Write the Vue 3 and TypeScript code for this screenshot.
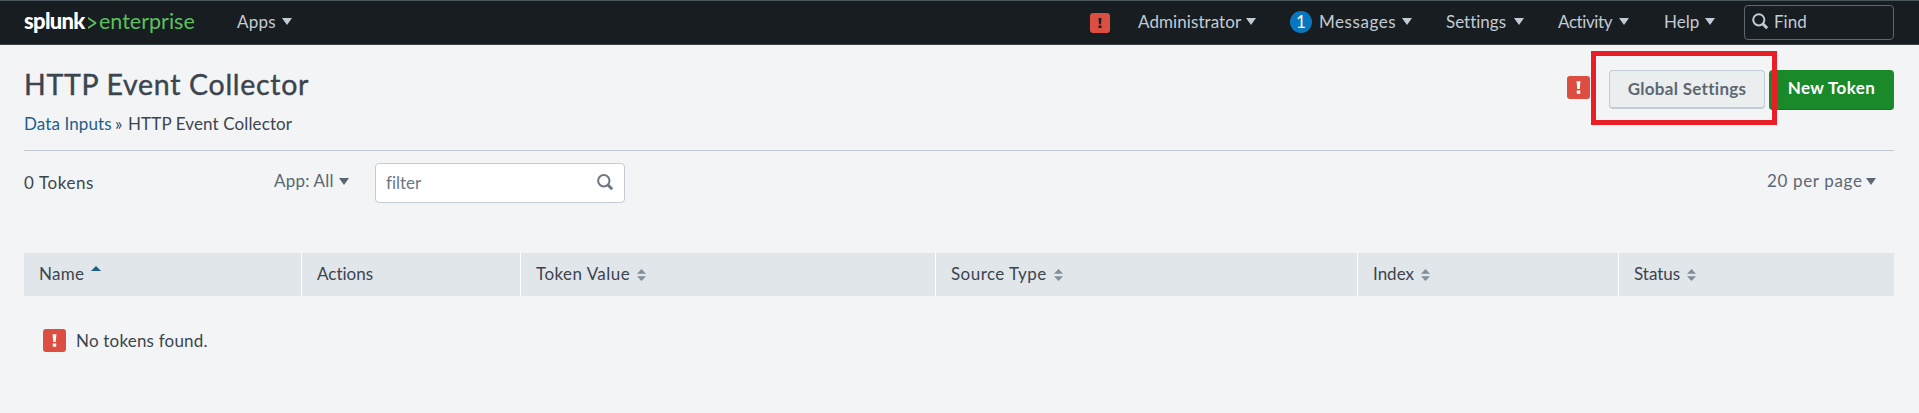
<script setup lang="ts">
interface MenuItem { id: string; label: string; badge?: string }
interface Column { id: string; label: string; sort: 'none' | 'both' | 'asc' }

const menus: MenuItem[] = [
  { id: 'administrator', label: 'Administrator' },
  { id: 'messages', label: 'Messages', badge: '1' },
  { id: 'settings', label: 'Settings' },
  { id: 'activity', label: 'Activity' },
  { id: 'help', label: 'Help' },
]

const columns: Column[] = [
  { id: 'name', label: 'Name', sort: 'asc' },
  { id: 'row-actions', label: 'Actions', sort: 'none' },
  { id: 'value', label: 'Token Value', sort: 'both' },
  { id: 'source', label: 'Source Type', sort: 'both' },
  { id: 'index', label: 'Index', sort: 'both' },
  { id: 'status', label: 'Status', sort: 'both' },
]
</script>

<template>
  <div class="page">
    <header class="navbar">
      <div class="logo"><span class="brand">splunk</span><svg class="chevron" viewBox="0 0 9 14"><path d="M0.5 1 L8.8 6.2 V7.8 L0.5 13 V10.9 L6.6 7 L0.5 3.1 Z" /></svg><span class="edition">enterprise</span></div>
      <a class="menu apps"><span class="label">Apps</span><i class="caret"></i></a>
      <div class="alert dark"><svg viewBox="0 0 24 24"><path d="M10.2 6 h3.6 l-.6 7.5 h-2.4z M10.3 15h3.4v3h-3.4z" /></svg></div>
      <a v-for="m in menus" :key="m.id" class="menu" :class="m.id">
        <span v-if="m.badge" class="badge">{{ m.badge }}</span>
        <span class="label">{{ m.label }}</span><i class="caret"></i>
      </a>
      <div class="find">
        <svg class="glass" viewBox="0 0 17 17"><circle cx="6.8" cy="6.8" r="5.6" /><path d="M11 11 L15.2 15.2" /></svg>
        <span>Find</span>
      </div>
    </header>

    <section class="heading">
      <div class="titles">
        <h1>HTTP Event Collector</h1>
        <nav class="crumbs"><a>Data Inputs</a><span class="sep">»</span><span class="here">HTTP Event Collector</span></nav>
      </div>
      <div class="actions">
        <div class="alert"><svg viewBox="0 0 24 24"><path d="M10 5.5 h4 l-.7 8 h-2.6z M10.2 15.2h3.6v3.2h-3.6z" /></svg></div>
        <div class="global">
          <button class="btn secondary">Global Settings</button>
          <div class="highlight"></div>
        </div>
        <button class="btn primary">New Token</button>
      </div>
    </section>

    <section class="toolbar">
      <span class="count">0 Tokens</span>
      <a class="app-filter"><span class="label">App: All</span><i class="caret"></i></a>
      <div class="filter">
        <span>filter</span>
        <svg class="glass" viewBox="0 0 17 17"><circle cx="6.8" cy="6.8" r="5.7" /><path d="M11 11 L15.2 15.2" /></svg>
      </div>
      <a class="per-page"><span class="label">20 per page</span><i class="caret"></i></a>
    </section>

    <div class="table-head">
      <div v-for="c in columns" :key="c.id" class="cell" :class="c.id">
        <span class="label">{{ c.label }}</span>
        <svg v-if="c.sort === 'both'" class="sort" viewBox="0 0 9 12"><path d="M0 4.8 L4.5 0 L9 4.8Z M0 7.2 L4.5 12 L9 7.2Z" /></svg>
        <svg v-if="c.sort === 'asc'" class="sort-asc" viewBox="0 0 10 5"><path d="M0 5 L5 0 L10 5Z" /></svg>
      </div>
    </div>

    <div class="empty">
      <div class="alert"><svg viewBox="0 0 24 24"><path d="M10 5.5 h4 l-.7 8 h-2.6z M10.2 15.2h3.6v3.2h-3.6z" /></svg></div>
      <span class="label">No tokens found.</span>
    </div>
  </div>
</template>

<style>
body { margin: 0; background: #f2f4f5; }
</style>

<style scoped>
* { box-sizing: border-box; }
.page { height: 413px; background: #f2f4f5; color: #3c444d; font: 17px/22px Lato, "Open Sans", sans-serif; font-variant-ligatures: none; overflow: hidden; white-space: nowrap; }
.navbar { height: 45px; display: flex; align-items: center; padding: 0 25px 2px 24px; background: #171d21; border-top: 1px solid #4b565c; border-bottom: 1px solid #3b4348; color: #c3cbd4; }
.logo { display: flex; align-items: center; width: 213px; font-size: 21.5px; line-height: 24px; height: 24px; margin-top: -2px; }
.brand { width: 62px; color: #fff; font-size: 22px; font-weight: 900; letter-spacing: -0.7px; }
.chevron { width: 10px; height: 14px; margin: 4px 2px 0 1px; fill: #5cc05c; flex: none; }
.edition { color: #5cc05c; }
.menu { display: flex; align-items: center; height: 22px; }
.caret { width: 0; height: 0; border: 5px solid transparent; border-top: 7px solid currentColor; border-bottom: 0; flex: none; }
.menu .caret { margin-top: -1px; }
.apps { width: 853px; }
.apps .label { width: 45px; letter-spacing: 0.2px; }
.administrator { width: 152px; margin-left: 28px; }
.administrator .label { width: 108px; letter-spacing: 0.08px; }
.messages { width: 156px; }
.badge { width: 22px; height: 22px; margin-right: 7px; border-radius: 50%; background: #0877bd; color: #fff; text-align: center; }
.messages .label { width: 83px; letter-spacing: 0.55px; }
.settings { width: 112px; }
.settings .label { width: 68px; }
.activity { width: 106px; }
.activity .label { width: 61px; letter-spacing: -0.4px; }
.help { width: 80px; }
.help .label { width: 41px; }
.find { width: 150px; height: 35px; display: flex; align-items: center; margin-top: 2px; padding: 0 0 2px 7px; border: 1px solid #5c6773; border-radius: 4px; }
.glass { width: 17px; height: 17px; fill: none; stroke: currentColor; stroke-width: 2; flex: none; }
.glass path { stroke-width: 3; }
.find .glass { margin-right: 5px; }
.alert { width: 23px; height: 23px; border-radius: 3px; background: #dc4e41; flex: none; }
.alert svg { display: block; width: 100%; height: 100%; fill: #fff; }
.alert.dark { width: 20px; height: 20px; margin-top: 2px; }
.alert.dark svg { fill: #171d21; }
.heading { height: 106px; margin: 0 25px 0 24px; border-bottom: 1px solid #c3cbd4; display: flex; justify-content: space-between; }
h1 { margin: 22px 0 0; font-size: 28.5px; line-height: 34px; font-weight: 400; letter-spacing: 0.7px; -webkit-text-stroke: 0.4px currentColor; }
.crumbs { display: flex; margin-top: 12px; }
.crumbs a { width: 91px; color: #1e5f8c; letter-spacing: 0.1px; }
.sep { width: 13px; }
.here { letter-spacing: 0.12px; }
.actions { display: flex; align-items: flex-start; padding-top: 25px; }
.actions > .alert { margin: 6px 19px 0 0; }
.global { position: relative; margin-right: 4px; }
.btn { display: block; padding: 0 0 1px; text-align: center; font: 700 17px/22px Lato, "Open Sans", sans-serif; border-radius: 4px; font-variant-ligatures: none; }
.secondary { width: 156px; height: 39px; color: #5c6773; background: #ebeeef; border: 1px solid #c3cbd4; border-bottom-width: 2px; letter-spacing: 0.3px; }
.primary { width: 125px; height: 40px; padding-bottom: 3px; color: #fff; background: #1a8929; border: 0; border-bottom: 1px solid #157322; letter-spacing: 0.4px; }
.highlight { position: absolute; left: -18px; top: -19px; width: 186px; height: 74px; border: 5px solid #e81f27; z-index: 2; }
.toolbar { height: 102px; display: flex; align-items: flex-start; padding: 12px 43px 0 24px; }
.count { width: 250px; padding-top: 9px; letter-spacing: 0.6px; }
.app-filter, .per-page { display: flex; align-items: center; padding-top: 7px; color: #5c6773; }
.app-filter { width: 101px; }
.app-filter .label { width: 65px; letter-spacing: 0.2px; }
.per-page { margin-left: auto; }
.per-page .label { width: 99px; letter-spacing: 0.65px; }
.filter { width: 250px; height: 40px; display: flex; align-items: center; justify-content: space-between; padding: 0 10px 1px; color: #6b7785; background: #fff; border: 1px solid #c3cbd4; border-radius: 4px; }
.table-head { height: 43px; margin: 0 25px 0 24px; display: grid; grid-template: 43px / 277px 219px 415px 422px 261px 276px; background: #e1e6eb; }
.cell { display: flex; align-items: center; padding: 0 0 2px 15px; border-left: 1px solid #fff; }
.cell.name { border-left-color: #e1e6eb; padding-left: 14px; letter-spacing: 0.3px; }
.cell.value, .cell.source { letter-spacing: 0.45px; }
.sort { width: 9px; height: 12px; margin: 2px 0 0 7px; fill: #818d99; }
.sort-asc { width: 10px; height: 5px; margin: -10px 0 0 7px; fill: #1e5f8c; }
.empty { display: flex; align-items: center; gap: 10px; padding: 33px 0 0 43px; letter-spacing: 0.2px; }
</style>
